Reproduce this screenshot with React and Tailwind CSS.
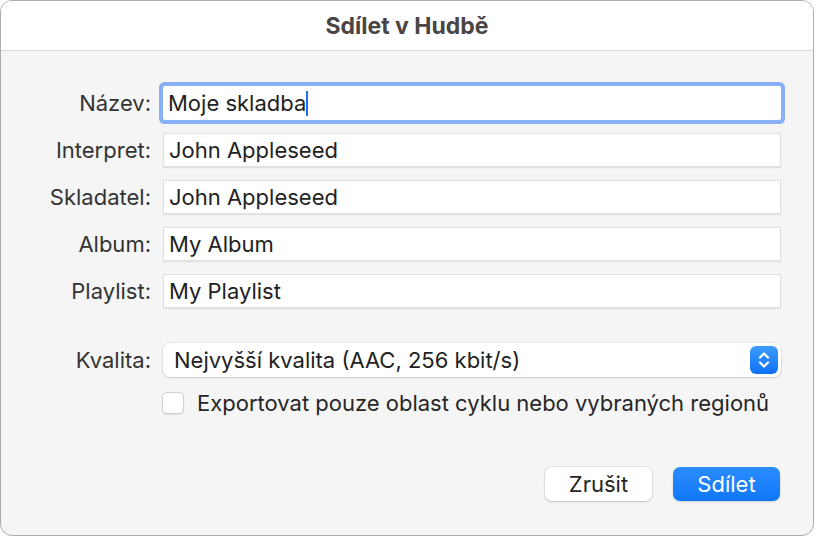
import React from 'react';

const fields = [
  { label: 'Název:', value: 'Moje skladba', focused: true },
  { label: 'Interpret:', value: 'John Appleseed' },
  { label: 'Skladatel:', value: 'John Appleseed' },
  { label: 'Album:', value: 'My Album' },
  { label: 'Playlist:', value: 'My Playlist' },
];

const Row = ({ label, children, className = '' }) => (
  <div className={`flex items-center ${className}`}>
    <div className="w-[150px] shrink-0 text-right text-[#333333]">{label}</div>
    <div className="ml-[12px] w-[618px]">{children}</div>
  </div>
);

const App = () => {
  return (
    <div className="w-[817px] h-[537px] bg-white" style={{ fontFamily: 'Inter, "Liberation Sans", sans-serif' }}>
      <div className="w-[814px] h-[536px] flex flex-col rounded-[12px] border border-[#ababab] overflow-hidden bg-[#f5f5f5] text-[22px] leading-[30px]">
        <div className="h-[50px] shrink-0 bg-white border-b border-[#d9d9d9] flex items-center justify-center">
          <h1 className="text-[23px] font-bold text-[#4a4545]">Sdílet v Hudbě</h1>
        </div>

        <div className="flex flex-col pt-[35px]">
          <div className="flex flex-col gap-[13px]">
            {fields.map((f) => (
              <Row key={f.label} label={f.label}>
                <div
                  className={`h-[34px] flex items-center px-[5px] bg-white text-[#222222] ${
                    f.focused
                      ? 'rounded-[2px] shadow-[0_0_0_4px_#89b0f6]'
                      : 'border border-[#e1e1e1] shadow-[0_1px_1px_rgba(0,0,0,0.08)]'
                  }`}
                >
                  <span>{f.value}</span>
                  {f.focused && <span className="inline-block w-[2px] h-[25px] bg-[#1f6ff0]" />}
                </div>
              </Row>
            ))}
          </div>

          <Row label="Kvalita:" className="mt-[35px]">
            <div className="h-[34px] flex items-center justify-between pl-[11px] pr-[3px] bg-white rounded-[7px] shadow-[0_0_0_1px_rgba(0,0,0,0.06),0_1px_2px_rgba(0,0,0,0.12)] text-[#222222]">
              <span>Nejvyšší kvalita (AAC, 256 kbit/s)</span>
              <div className="w-[28px] h-[28px] rounded-[6px] bg-gradient-to-b from-[#3d9bff] to-[#0a70f5] flex items-center justify-center">
                <svg width="14" height="20" viewBox="0 0 14 20" fill="none" stroke="white" strokeWidth="2.2" strokeLinecap="round" strokeLinejoin="round">
                  <path d="M3 7.5 L7 3.5 L11 7.5" />
                  <path d="M3 12.5 L7 16.5 L11 12.5" />
                </svg>
              </div>
            </div>
          </Row>

          <div className="flex items-center h-[22px] mt-[15px] ml-[161px]">
            <div className="w-[22px] h-[22px] shrink-0 rounded-[5px] bg-white border border-[#cfcfcf] shadow-[0_1px_1px_rgba(0,0,0,0.08)]" />
            <span className="ml-[13px] text-[#262626] whitespace-nowrap">Exportovat pouze oblast cyklu nebo vybraných regionů</span>
          </div>

          <div className="flex justify-end gap-[21px] mt-[53px] pr-[33px]">
            <button className="w-[107px] h-[34px] rounded-[7px] bg-white text-[#262626] shadow-[0_0_0_1px_rgba(0,0,0,0.06),0_1px_2px_rgba(0,0,0,0.15)]">
              Zrušit
            </button>
            <button className="w-[107px] h-[34px] rounded-[7px] bg-gradient-to-b from-[#2a8cff] to-[#0f77f7] text-white shadow-[0_1px_2px_rgba(0,0,0,0.15)]">
              Sdílet
            </button>
          </div>
        </div>
      </div>
    </div>
  );
};

export default App;
